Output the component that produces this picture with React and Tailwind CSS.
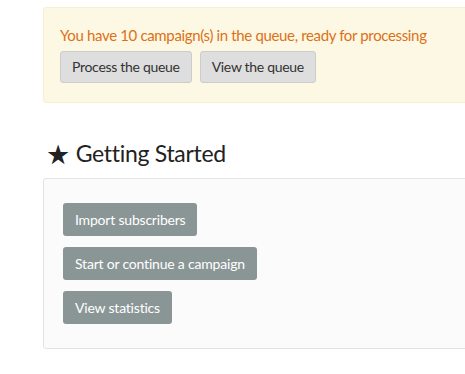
import React from "react"

const font = { fontFamily: "Lato, 'Open Sans', sans-serif" }

const QueueButton = ({ children }) => (
  <button className="h-8 px-[11px] rounded-[3px] border border-[#cccccc] bg-[#dedede] text-[14px] tracking-[-0.3px] text-[#333333] leading-none">
    {children}
  </button>
)

const ActionButton = ({ children }) => (
  <button className="h-[33px] px-3 rounded-[3px] bg-[#8a9696] text-[14px] tracking-[-0.2px] text-white leading-none">
    {children}
  </button>
)

const App = () => {
  return (
    <div className="w-full h-[374px] overflow-hidden bg-white" style={font}>
      <div className="ml-[43px] pt-[7px] w-[560px]">
        {/* queue notice */}
        <div className="h-[96px] pt-[15px] pl-4 rounded-[3px] border border-[#f7efd2] bg-[#fcf8e3]">
          <p className="h-6 leading-6 text-[15px] tracking-[-0.35px] text-[#dc7119]">
            You have 10 campaign(s) in the queue, ready for processing
          </p>
          <div className="mt-1 flex gap-2">
            <QueueButton>Process the queue</QueueButton>
            <QueueButton>View the queue</QueueButton>
          </div>
        </div>

        {/* getting started */}
        <h2 className="mt-[30px] h-10 flex items-center gap-[6px] pl-[3px] text-[23px] tracking-[-0.3px] text-[#222222]">
          <span className="text-[27px] leading-none">★</span>
          <span>Getting Started</span>
        </h2>
        <div className="mt-[5px] h-[171px] rounded-[3px] border border-[#e3e3e3] bg-[#fbfbfb] pt-6 pl-[19px] flex flex-col items-start gap-[11px]">
          <ActionButton>Import subscribers</ActionButton>
          <ActionButton>Start or continue a campaign</ActionButton>
          <ActionButton>View statistics</ActionButton>
        </div>
      </div>
    </div>
  )
}

export default App
